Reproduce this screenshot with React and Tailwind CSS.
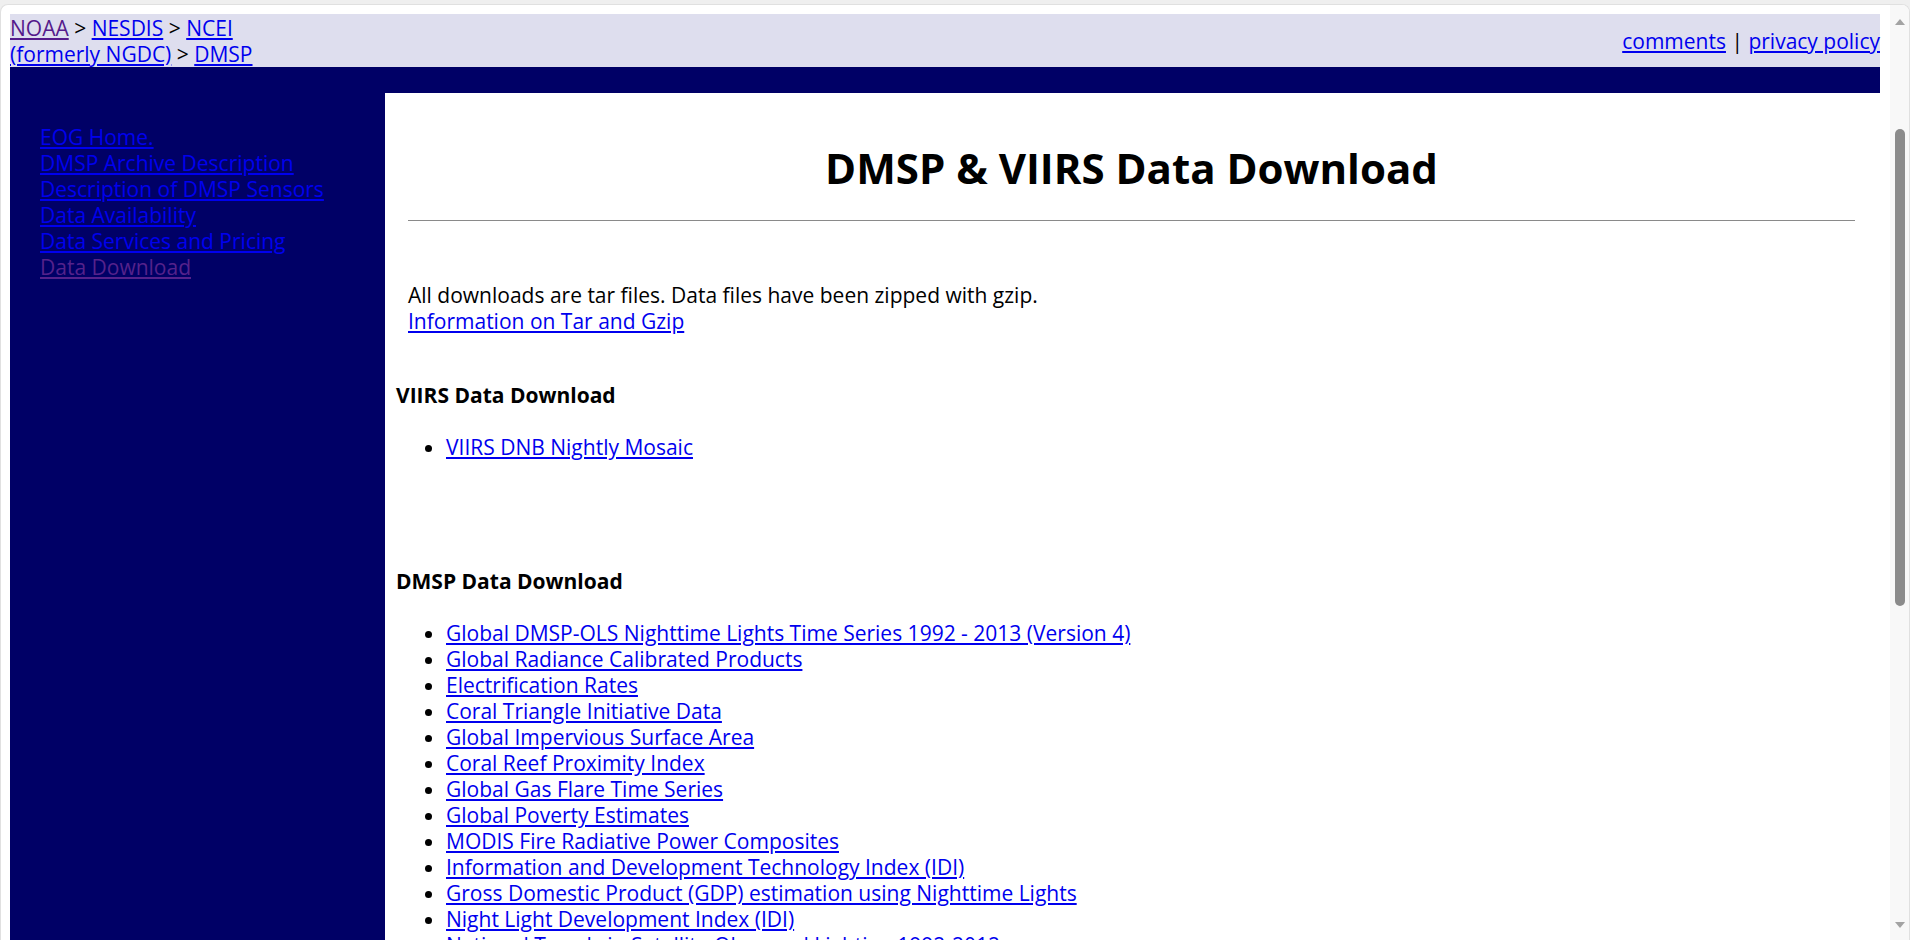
import React from "react";

const sideLinks = [
  { t: "EOG Home.", v: false },
  { t: "DMSP Archive Description", v: false },
  { t: "Description of DMSP Sensors", v: false },
  { t: "Data Availability", v: false },
  { t: "Data Services and Pricing", v: false },
  { t: "Data Download", v: true },
];

const dmspItems = [
  "Global DMSP-OLS Nighttime Lights Time Series 1992 - 2013 (Version 4)",
  "Global Radiance Calibrated Products",
  "Electrification Rates",
  "Coral Triangle Initiative Data",
  "Global Impervious Surface Area",
  "Coral Reef Proximity Index",
  "Global Gas Flare Time Series",
  "Global Poverty Estimates",
  "MODIS Fire Radiative Power Composites",
  "Information and Development Technology Index (IDI)",
  "Gross Domestic Product (GDP) estimation using Nighttime Lights",
  "Night Light Development Index (IDI)",
  "National Trends in Satellite Observed Lighting 1992-2012",
  "Global Urban Extent",
];

function L({ children, visited }) {
  return (
    <a
      href="#"
      className={
        "underline " + (visited ? "text-[#551a8b]" : "text-[#0000ee]")
      }
    >
      {children}
    </a>
  );
}

export default function App() {
  return (
    <div
      className="w-[1910px] h-[940px] overflow-hidden bg-[#efefef] text-[21px] leading-[26px] text-black"
      style={{ fontFamily: '"Open Sans", "Noto Sans", sans-serif' }}
    >
      <div className="mt-[4px] h-[936px] bg-white rounded-t-[8px] border-t border-l border-r border-[#e0e0e0] flex overflow-hidden">
        {/* page */}
        <div className="flex-1 pl-[9px] pr-[10px] pt-[9px] overflow-hidden">
          {/* header */}
          <div className="flex items-center justify-between bg-[#dedeee] h-[53px]">
            <div className="w-[262px]">
              <L visited>NOAA</L> &gt; <L>NESDIS</L> &gt; <L>NCEI</L>{" "}
              <L>(formerly NGDC)</L> &gt; <L>DMSP</L>
            </div>
            <div>
              <L>comments</L> | <L>privacy policy</L>
            </div>
          </div>
          <div className="h-[26px] bg-[#000066]" />
          <div className="flex bg-[#000066] h-[900px]">
            {/* sidebar */}
            <div className="w-[375px] pl-[30px] pt-[31px] flex flex-col">
              {sideLinks.map((s) => (
                <div key={s.t}>
                  <a
                    href="#"
                    className={
                      "underline " +
                      (s.v ? "text-[#55228b]" : "text-[#0000ee]")
                    }
                  >
                    {s.t}
                  </a>
                </div>
              ))}
            </div>
            {/* content */}
            <div className="flex-1 bg-white pl-[11px] pr-[13px]">
              <div className="px-[12px]">
                <h1 className="mt-[48px] text-center text-[42px] leading-[53px] font-bold">
                  DMSP &amp; VIIRS Data Download
                </h1>
                <div className="mt-[26px] h-px bg-[#8a8a8a]" />
                <p className="mt-[61px]">
                  All downloads are tar files. Data files have been zipped with gzip.
                  <br />
                  <L>Information on Tar and Gzip</L>
                </p>
              </div>
              <div className="mt-[48px] font-bold">VIIRS Data Download</div>
              <ul className="mt-[26px] list-disc pl-[50px]">
                <li>
                  <L>VIIRS DNB Nightly Mosaic</L>
                </li>
              </ul>
              <div className="mt-[108px] font-bold">DMSP Data Download</div>
              <ul className="mt-[26px] list-disc pl-[50px]">
                {dmspItems.map((t) => (
                  <li key={t}>
                    <L>{t}</L>
                  </li>
                ))}
              </ul>
            </div>
          </div>
        </div>
        {/* scrollbar */}
        <div className="w-[19px] bg-[#f8f8f8] flex flex-col items-center">
          <div className="mt-[14px] w-0 h-0 border-l-[5px] border-r-[5px] border-b-[6px] border-l-transparent border-r-transparent border-b-[#a3a3a3]" />
          <div className="mt-[104px] w-[10px] h-[477px] rounded-full bg-[#8b8b8b]" />
          <div className="flex-1" />
          <div className="mb-[12px] w-0 h-0 border-l-[5px] border-r-[5px] border-t-[6px] border-l-transparent border-r-transparent border-t-[#a3a3a3]" />
        </div>
      </div>
    </div>
  );
}
